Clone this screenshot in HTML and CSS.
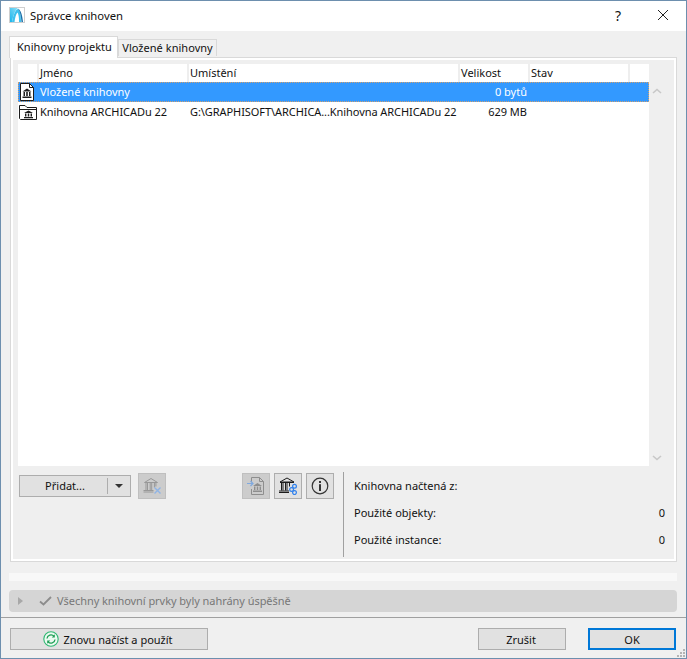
FILE: index.html
```html
<!DOCTYPE html>
<html lang="cs">
<head>
  <meta charset="UTF-8">
  <title>Správce knihoven</title>
  <link rel="stylesheet" href="styles.css">
</head>
<body>

<div class="window">
  <div class="titlebar">
    <svg class="app-icon" width="16" height="16" viewBox="0 0 16 16">
      <defs>
        <linearGradient id="logo" x1="0" y1="1" x2="1" y2="0">
          <stop offset="0" stop-color="#19b5ec"/>
          <stop offset="1" stop-color="#8fe0f7"/>
        </linearGradient>
      </defs>
      <rect x="0.5" y="0.5" width="15" height="15" fill="#fff" stroke="#cfcfcf"/>
      <path d="M1 1 H9 C6 3 4 9 3 15 H1 Z" fill="url(#logo)"/>
      <path d="M3 15 C4 9 6 3 9 2 C11 3 12 9 12 15 H10 C10 10 9.5 7 8.5 5.5 C7 7 6 11 5.5 15 Z" fill="#3cc0ee"/>
      <path d="M9 1.5 C12 3 13.5 9 14 15 H12.5 C12 9 11 4 9 1.5 Z" fill="#1c6fa8"/>
    </svg>
    <span class="title">Správce knihoven</span>
    <span class="help">?</span>
    <svg class="close" width="12" height="12" viewBox="0 0 12 12"><path d="M1 1 L11 11 M11 1 L1 11" stroke="#222" stroke-width="1" fill="none"/></svg>
  </div>

  <div class="content">
    <div class="tabs">
      <div class="tab active">Knihovny projektu</div>
      <div class="tab">Vložené knihovny</div>
    </div>

    <div class="panel">
      <div class="panel-inner">
        <div class="list-wrap">
          <div class="list">
            <div class="row head">
              <div class="cell"></div>
              <div class="cell">Jméno</div>
              <div class="cell">Umístění</div>
              <div class="cell">Velikost</div>
              <div class="cell">Stav</div>
              <div class="cell"></div>
            </div>
            <div class="row item selected">
              <div class="cell icon">
                <svg width="16" height="18" viewBox="0 0 16 18">
                  <path d="M1.5 0.5 H10.5 L14.5 4.5 V17.5 H1.5 Z" fill="#fff" stroke="#1c1c1c"/>
                  <path d="M10.5 0.5 V4.5 H14.5" fill="none" stroke="#1c1c1c"/>
                  <path d="M8 5.5 L12.5 8.5 H3.5 Z M4.5 9 H6 V13 H4.5 Z M7.2 9 H8.8 V13 H7.2 Z M10 9 H11.5 V13 H10 Z M3.5 13.5 H12.5 V15 H3.5 Z" fill="#1c1c1c"/>
                </svg>
              </div>
              <div class="cell">Vložené knihovny</div>
              <div class="cell"></div>
              <div class="cell num">0 bytů</div>
              <div class="cell"></div>
              <div class="cell"></div>
            </div>
            <div class="row item">
              <div class="cell icon">
                <svg width="18" height="16" viewBox="0 0 18 16">
                  <path d="M0.5 14.5 V1.5 H6 L8 3.5 H17.5 V15.5 H1.5 Z" fill="#fff" stroke="#1c1c1c"/>
                  <path d="M0.5 5.5 H17.5" stroke="#1c1c1c" fill="none"/>
                  <path d="M9.5 6.5 L14 9 H5 Z M6 9.5 H7.4 V12.5 H6 Z M8.8 9.5 H10.2 V12.5 H8.8 Z M11.6 9.5 H13 V12.5 H11.6 Z M5 13 H14 V14.2 H5 Z" fill="#1c1c1c"/>
                </svg>
              </div>
              <div class="cell lib-name">Knihovna ARCHICADu 22</div>
              <div class="cell path">G:\GRAPHISOFT\ARCHICA...Knihovna ARCHICADu 22</div>
              <div class="cell num">629 MB</div>
              <div class="cell"></div>
              <div class="cell"></div>
            </div>
          </div>
          <div class="scroll">
            <svg width="10" height="6" viewBox="0 0 10 6"><path d="M1 5 L5 1.5 L9 5" fill="none" stroke="#c8c8c8" stroke-width="1.6"/></svg>
            <svg width="10" height="6" viewBox="0 0 10 6"><path d="M1 1 L5 4.5 L9 1" fill="none" stroke="#c8c8c8" stroke-width="1.6"/></svg>
          </div>
        </div>

        <div class="bottom">
          <div class="tools">
            <div class="split">
              <span class="split-label">Přidat...</span>
              <span class="split-arrow"></span>
            </div>
            <div class="tool off remove">
              <svg width="20" height="18" viewBox="0 0 20 18">
                <path d="M9 1.5 L15.5 5.5 H2.5 Z" fill="none" stroke="#989898"/>
                <path d="M4 6 V13 M5.5 6 V13 M8.2 6 V13 M9.7 6 V13 M12.4 6 V10.5 M13.9 6 V9.5 M1.5 13.5 H11.5 M1.5 15 H11.5" fill="none" stroke="#989898"/>
                <path d="M12.5 10.5 L18.5 16.5 M18.5 10.5 L12.5 16.5" stroke="#8fb4e6" stroke-width="1.4" fill="none"/>
              </svg>
            </div>
            <div class="tool-group">
              <div class="tool off">
                <svg width="20" height="20" viewBox="0 0 20 20">
                  <path d="M5.5 6 V1.5 H13.5 L17.5 5.5 V18.5 H5.5 V13" fill="none" stroke="#8e8e8e"/>
                  <path d="M13.5 1.5 V5.5 H17.5" fill="none" stroke="#8e8e8e"/>
                  <path d="M11.5 7 L16 10 H7 Z M8 10.5 H9.4 V14 H8 Z M10.8 10.5 H12.2 V14 H10.8 Z M13.6 10.5 H15 V14 H13.6 Z M7 14.5 H16 V16 H7 Z" fill="#8e8e8e"/>
                  <path d="M1 7.5 H7 M4.5 5 L7 7.5 L4.5 10" fill="none" stroke="#7fa9e0" stroke-width="1.2"/>
                </svg>
              </div>
              <div class="tool">
                <svg width="20" height="18" viewBox="0 0 20 18">
                  <path d="M9 1 L16 5 H2 Z" fill="none" stroke="#1d1d1d"/>
                  <path d="M2 5.5 H16 M3.5 6 V13.5 M5 6 V13.5 M7.5 6 V13.5 M9 6 V13.5 M11.5 6 V9.5 M1 14 H11 M1 15.5 H11" fill="none" stroke="#1d1d1d"/>
                  <circle cx="16.5" cy="9.3" r="1.9" fill="none" stroke="#2f80ed" stroke-width="1.2"/>
                  <circle cx="13.6" cy="12.5" r="1.9" fill="none" stroke="#2f80ed" stroke-width="1.2"/>
                  <circle cx="16.5" cy="15.6" r="1.9" fill="none" stroke="#2f80ed" stroke-width="1.2"/>
                </svg>
              </div>
              <div class="tool">
                <svg width="18" height="18" viewBox="0 0 18 18">
                  <circle cx="9" cy="9" r="7.8" fill="none" stroke="#333" stroke-width="1.2"/>
                  <rect x="8" y="4" width="2" height="2" fill="#333"/>
                  <rect x="8" y="7.2" width="2" height="6.8" fill="#333"/>
                </svg>
              </div>
            </div>
          </div>
          <div class="info">
            <div class="info-row"><span>Knihovna načtená z:</span></div>
            <div class="info-row"><span>Použité objekty:</span><span>0</span></div>
            <div class="info-row"><span>Použité instance:</span><span>0</span></div>
          </div>
        </div>
      </div>
    </div>

    <div class="progress"></div>

    <div class="status">
      <span class="status-arrow"></span>
      <svg width="13" height="10" viewBox="0 0 13 10"><path d="M1 5.5 L4.5 8.5 L12 1" fill="none" stroke="#8c8c8c" stroke-width="1.8"/></svg>
      <span class="status-text">Všechny knihovní prvky byly nahrány úspěšně</span>
    </div>
  </div>

  <div class="footer">
    <button class="btn reload">
      <svg width="16" height="16" viewBox="0 0 16 16">
        <circle cx="8" cy="8" r="7.2" fill="#eafaf0" stroke="#2eb872" stroke-width="1.1"/>
        <path d="M4 7.5 A4 4 0 0 1 11 5.2 M12 8.5 A4 4 0 0 1 5 10.8" fill="none" stroke="#1f9d55" stroke-width="1.3"/>
        <path d="M11.8 3.2 V6.4 H8.8 Z M4.2 12.8 V9.6 H7.2 Z" fill="#1f9d55"/>
      </svg>
      Znovu načíst a použít
    </button>
    <div class="footer-right">
      <button class="btn cancel">Zrušit</button>
      <button class="btn ok">OK</button>
    </div>
    <svg class="grip" width="9" height="9" viewBox="0 0 9 9" fill="#b4b4b4">
      <rect x="6" y="0" width="2" height="2"/>
      <rect x="3" y="3" width="2" height="2"/><rect x="6" y="3" width="2" height="2"/>
      <rect x="0" y="6" width="2" height="2"/><rect x="3" y="6" width="2" height="2"/><rect x="6" y="6" width="2" height="2"/>
    </svg>
  </div>
</div>

</body>
</html>
```

FILE: styles.css
```css
* {
  box-sizing: border-box;
}

html, body {
  height: 100%;
}

body {
  margin: 0;
  font-family: "Noto Sans", "Open Sans", Arial, sans-serif;
  font-size: 11px;
  color: #111;
  background: #f0f0f0;
}

.window {
  height: 659px;
  display: flex;
  flex-direction: column;
  border: 1px solid #6d8fae;
  background: #f0f0f0;
}

.titlebar {
  height: 30px;
  flex: none;
  display: flex;
  align-items: center;
  background: #fff;
  padding: 0 0 2px 8px;
}

.app-icon {
  margin-right: 5px;
}

.title {
  font-size: 11.3px;
  flex: 1;
}

.help {
  font-size: 14px;
  margin-right: 36px;
}

.close {
  margin-right: 17px;
}

.content {
  flex: 1;
  padding: 4px 9px 0 8px;
}

.tabs {
  display: flex;
  align-items: flex-end;
  height: 22px;
  position: relative;
  z-index: 1;
}

.tab {
  height: 17px;
  width: 99px;
  margin-bottom: 1px;
  text-align: center;
  line-height: 16px;
  letter-spacing: 0.03px;
  background: #f0f0f0;
  border: 1px solid #d9d9d9;
  border-bottom: none;
}

.tab.active {
  height: 22px;
  width: 109px;
  margin-bottom: -1px;
  line-height: 19px;
  letter-spacing: 0.06px;
  padding-left: 2px;
  background: #fff;
  border-color: #d9d9d9;
}

.panel {
  height: 505px;
  border: 1px solid #d9d9d9;
  background: #fff;
  padding: 2px;
  margin-left: 1px;
}

.panel-inner {
  height: 100%;
  background: #efefef;
  padding: 4px 8px 0 5px;
  display: flex;
  flex-direction: column;
}

.list-wrap {
  height: 402px;
  flex: none;
  display: flex;
}

.list {
  width: 631px;
  background: #fff;
}

.row {
  display: grid;
  grid-template-columns: 19px 150px 271px 70px 100px 21px;
}

.head {
  height: 18px;
  line-height: 18px;
}

.head .cell {
  border-left: 2px solid #eeeeee;
  padding-left: 1px;
}

.head .cell:first-child {
  border-left: none;
}

.item {
  height: 20px;
  line-height: 20px;
}

.item .cell {
  padding-left: 3px;
  white-space: nowrap;
}

.item .icon {
  padding: 0 0 0 1px;
  display: flex;
  align-items: center;
}

.item .num {
  text-align: right;
  padding: 0 1px 0 0;
}

.item .lib-name {
  letter-spacing: -0.05px;
}

.item .path {
  letter-spacing: -0.07px;
}

/* dotted focus edge, drawn pixel by pixel */
.selected {
  color: #fff;
  background:
    repeating-linear-gradient(90deg, #d0a070 0 1px, transparent 1px 2px) top / 100% 1px no-repeat,
    repeating-linear-gradient(90deg, #d0a070 0 1px, transparent 1px 2px) bottom / 100% 1px no-repeat,
    repeating-linear-gradient(0deg, #d0a070 0 1px, transparent 1px 2px) left / 1px 100% no-repeat,
    repeating-linear-gradient(0deg, #d0a070 0 1px, transparent 1px 2px) right / 1px 100% no-repeat,
    #3399ff;
}

.scroll {
  width: 18px;
  display: flex;
  flex-direction: column;
  justify-content: space-between;
  align-items: center;
  padding: 24px 2px 5px 0;
}

.bottom {
  flex: 1;
  display: flex;
}

.tools {
  width: 325px;
  display: flex;
  align-items: flex-start;
  padding-top: 7px;
  padding-left: 1px;
}

.split {
  width: 112px;
  height: 22px;
  margin-top: 2px;
  display: flex;
  align-items: center;
  background: #e1e1e1;
  border: 1px solid #adadad;
}

.split-label {
  flex: 1;
  text-align: center;
  padding-left: 3px;
  border-right: 1px solid #adadad;
  height: 16px;
  line-height: 15px;
}

.split-arrow {
  width: 22px;
  display: flex;
  justify-content: center;
}

.split-arrow::before {
  content: "";
  border-left: 4px solid transparent;
  border-right: 4px solid transparent;
  border-top: 4px solid #333;
}

.tool {
  width: 28px;
  height: 26px;
  display: flex;
  align-items: center;
  justify-content: center;
  background: #e1e1e1;
  border: 1px solid #adadad;
}

.tool.off {
  background: #cccccc;
  border-color: #bfbfbf;
}

.remove {
  margin-left: 7px;
}

.tool-group {
  display: flex;
  gap: 4px;
  margin-left: 76px;
}

.info {
  flex: 1;
  margin: 6px 0 2px;
  border-left: 1px solid #a0a0a0;
  padding: 0 1px 0 10px;
}

.info-row {
  height: 27px;
  display: flex;
  align-items: center;
  justify-content: space-between;
}

.progress {
  height: 8px;
  margin: 11px 0 0 0;
  background: #f8f8f8;
}

.status {
  height: 22px;
  margin-top: 9px;
  display: flex;
  align-items: center;
  padding: 0 0 1px 9px;
  background: #d5d5d5;
  border-radius: 4px;
  color: #777;
}

.status-arrow {
  border-top: 4px solid transparent;
  border-bottom: 4px solid transparent;
  border-left: 5px solid #a8a8a8;
  margin-right: 16px;
}

.status svg {
  margin-right: 5px;
}

.status-text {
  letter-spacing: -0.05px;
}

.footer {
  height: 41px;
  flex: none;
  border-top: 1px solid #a0a0a0;
  padding: 10px 10px 0 9px;
  display: flex;
  justify-content: space-between;
  position: relative;
}

.footer-right {
  display: flex;
  gap: 22px;
}

.btn {
  height: 22px;
  padding: 0;
  font: inherit;
  color: #111;
  background: #e1e1e1;
  border: 1px solid #adadad;
}

.reload {
  width: 198px;
  display: flex;
  align-items: center;
  justify-content: center;
  gap: 4px;
  padding-right: 2px;
}

.cancel {
  width: 88px;
  padding-right: 2px;
}

.ok {
  width: 88px;
  border: 2px solid #0078d7;
}

.grip {
  position: absolute;
  right: 0;
  bottom: 0;
}
```
